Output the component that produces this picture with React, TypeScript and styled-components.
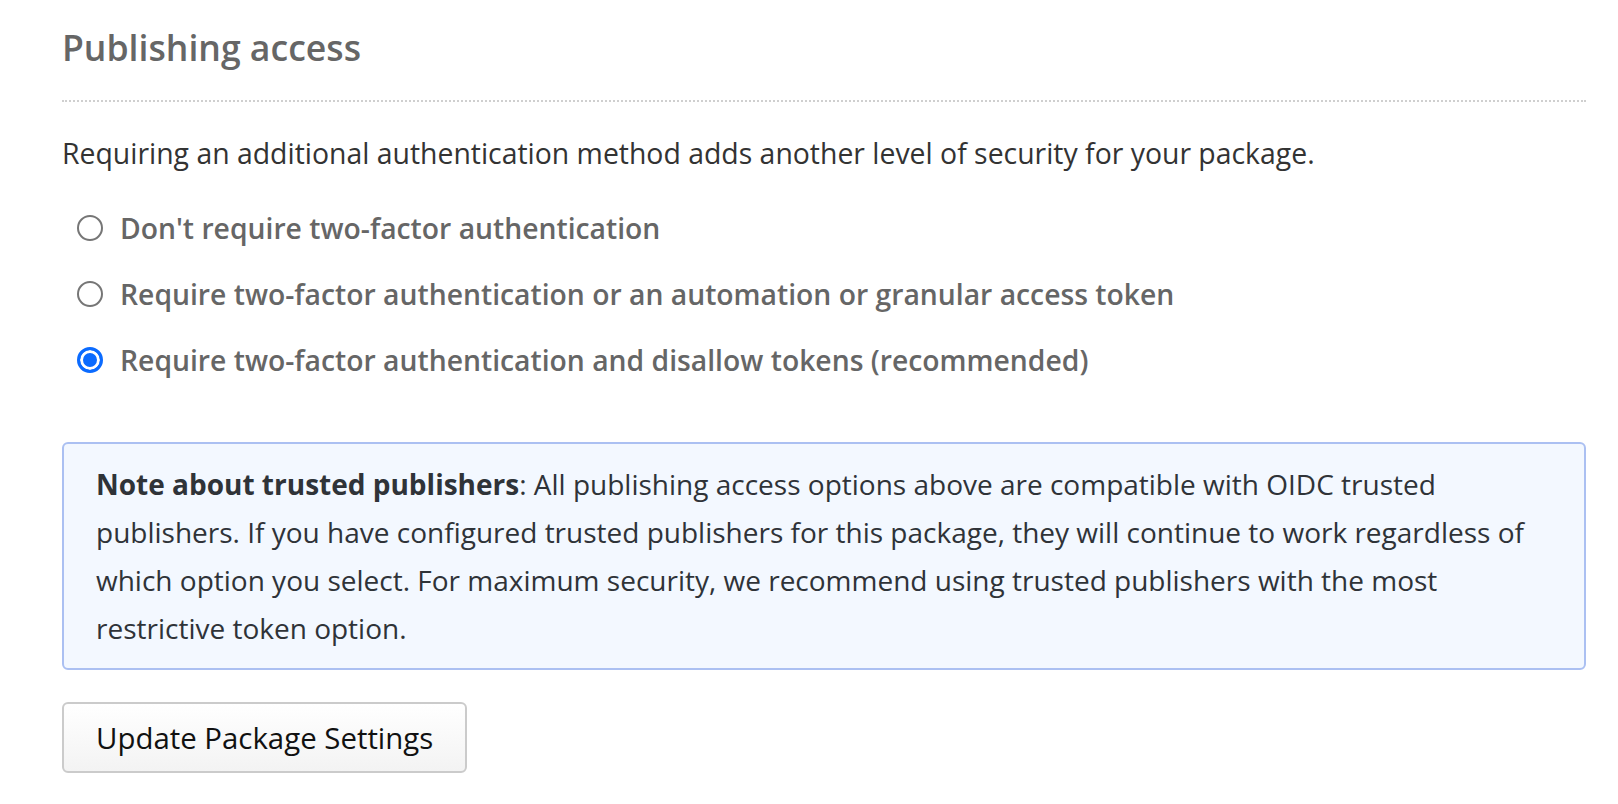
import React, { useState } from 'react';
import styled, { createGlobalStyle } from 'styled-components';

const GlobalStyle = createGlobalStyle`
  html, body {
    margin: 0;
    padding: 0;
    background: #fff;
  }
  body {
    font-family: 'Open Sans', 'Noto Sans', sans-serif;
    color: #333;
  }
`;

const Page = styled.main`
  width: 1524px;
  margin-left: 62px;
  padding-top: 23px;
`;

const Heading = styled.h2`
  margin: 0;
  padding-bottom: 29px;
  border-bottom: 2px dotted #cfcfcf;
  font-size: 35.6px;
  line-height: 48px;
  font-weight: 600;
  color: #666;
`;

const Intro = styled.p`
  margin: 30px 0 21px;
  font-size: 28.4px;
  line-height: 42px;
  color: #333;
`;

const Options = styled.div`
  display: flex;
  flex-direction: column;
`;

const Option = styled.label`
  display: flex;
  align-items: center;
  height: 66px;
  cursor: pointer;
`;

const RadioInput = styled.input`
  appearance: none;
  box-sizing: border-box;
  width: 26px;
  height: 26px;
  margin: 0 17px 0 15px;
  border: 2px solid #767676;
  border-radius: 50%;
  background: #fff;
  flex-shrink: 0;

  &:checked {
    border: 3px solid #0b6bff;
    box-shadow: inset 0 0 0 3px #fff;
    background: #0b6bff;
  }
`;

const OptionText = styled.span`
  font-size: 28.3px;
  font-weight: 600;
  color: #666;
  line-height: 40px;
`;

const Note = styled.div`
  margin-top: 49px;
  padding: 16px 30px 16px 32px;
  border: 2px solid #abc0f2;
  border-radius: 6px;
  background: #f3f8ff;
  font-size: 28px;
  line-height: 48px;
  color: #2f3338;

  strong {
    font-weight: 700;
  }
`;

const UpdateButton = styled.button`
  margin-top: 32px;
  height: 71px;
  padding: 0 32px;
  border: 2px solid #cbcbcb;
  border-radius: 6px;
  background: linear-gradient(#ffffff, #f3f3f3);
  font-family: 'Open Sans', 'Noto Sans', sans-serif;
  font-size: 29.4px;
  color: #111;
  cursor: pointer;
`;

const options = [
  { id: 'none', label: "Don't require two-factor authentication" },
  { id: 'tfa-or-token', label: 'Require two-factor authentication or an automation or granular access token' },
  { id: 'tfa-only', label: 'Require two-factor authentication and disallow tokens (recommended)' },
];

export default function App() {
  const [selected, setSelected] = useState('tfa-only');

  return (
    <>
      <GlobalStyle />
      <Page>
        <Heading>Publishing access</Heading>
        <Intro>
          Requiring an additional authentication method adds another level of security for your package.
        </Intro>
        <Options>
          {options.map((o) => (
            <Option key={o.id}>
              <RadioInput
                type="radio"
                name="mfa"
                value={o.id}
                checked={selected === o.id}
                onChange={() => setSelected(o.id)}
              />
              <OptionText>{o.label}</OptionText>
            </Option>
          ))}
        </Options>
        <Note>
          <strong>Note about trusted publishers</strong>: All publishing access options above are compatible with
          OIDC trusted publishers. If you have configured trusted publishers for this package, they will continue to
          work regardless of which option you select. For maximum security, we recommend using trusted publishers with
          the most restrictive token option.
        </Note>
        <UpdateButton type="button">Update Package Settings</UpdateButton>
      </Page>
    </>
  );
}
